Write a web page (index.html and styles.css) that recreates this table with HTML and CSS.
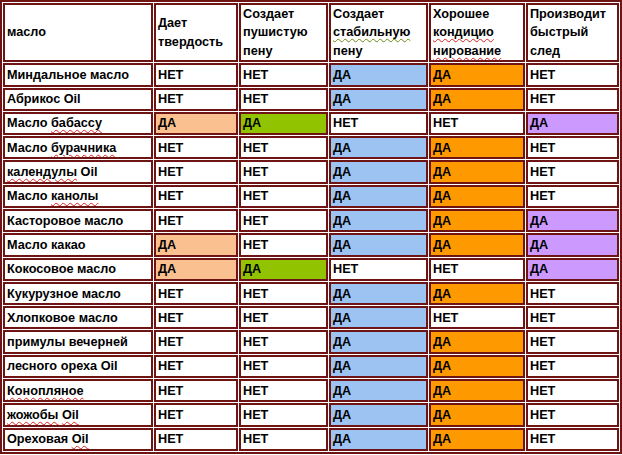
FILE: index.html
```html
<!DOCTYPE html>
<html lang="ru">
<head>
<meta charset="utf-8">
<link rel="stylesheet" href="styles.css">
</head>
<body>
<table class="grid">
  <colgroup>
    <col class="c1"><col class="c2"><col class="c3"><col class="c4"><col class="c5"><col class="c6">
  </colgroup>
  <thead>
    <tr class="head">
      <th>масло</th>
      <th>Дает твердость</th>
      <th>Создает пушистую пену</th>
      <th>Создает <span class="sp-g">стабильную</span> пену</th>
      <th>Хорошее <span class="sp">кондицио</span> <span class="sp">нирование</span></th>
      <th>Производит быстрый след</th>
    </tr>
  </thead>
  <tbody>
    <tr><td>Миндальное масло</td><td>НЕТ</td><td>НЕТ</td><td class="blue">ДА</td><td class="orange">ДА</td><td>НЕТ</td></tr>
    <tr><td>Абрикос Oil</td><td>НЕТ</td><td>НЕТ</td><td class="blue">ДА</td><td class="orange">ДА</td><td>НЕТ</td></tr>
    <tr><td>Масло <span class="sp">бабассу</span></td><td class="peach">ДА</td><td class="green">ДА</td><td>НЕТ</td><td>НЕТ</td><td class="purple">ДА</td></tr>
    <tr><td>Масло <span class="sp">бурачника</span></td><td>НЕТ</td><td>НЕТ</td><td class="blue">ДА</td><td class="orange">ДА</td><td>НЕТ</td></tr>
    <tr><td><span class="sp">календулы</span> Oil</td><td>НЕТ</td><td>НЕТ</td><td class="blue">ДА</td><td class="orange">ДА</td><td>НЕТ</td></tr>
    <tr><td>Масло <span class="sp">канолы</span></td><td>НЕТ</td><td>НЕТ</td><td class="blue">ДА</td><td class="orange">ДА</td><td>НЕТ</td></tr>
    <tr><td>Касторовое масло</td><td>НЕТ</td><td>НЕТ</td><td class="blue">ДА</td><td class="orange">ДА</td><td class="purple">ДА</td></tr>
    <tr><td>Масло какао</td><td class="peach">ДА</td><td>НЕТ</td><td class="blue">ДА</td><td class="orange">ДА</td><td class="purple">ДА</td></tr>
    <tr><td>Кокосовое масло</td><td class="peach">ДА</td><td class="green">ДА</td><td>НЕТ</td><td>НЕТ</td><td class="purple">ДА</td></tr>
    <tr><td>Кукурузное масло</td><td>НЕТ</td><td>НЕТ</td><td class="blue">ДА</td><td class="orange">ДА</td><td>НЕТ</td></tr>
    <tr><td>Хлопковое масло</td><td>НЕТ</td><td>НЕТ</td><td class="blue">ДА</td><td>НЕТ</td><td>НЕТ</td></tr>
    <tr><td>примулы вечерней</td><td>НЕТ</td><td>НЕТ</td><td class="blue">ДА</td><td class="orange">ДА</td><td>НЕТ</td></tr>
    <tr><td>лесного ореха Oil</td><td>НЕТ</td><td>НЕТ</td><td class="blue">ДА</td><td class="orange">ДА</td><td>НЕТ</td></tr>
    <tr><td><span class="sp">Конопляное</span></td><td>НЕТ</td><td>НЕТ</td><td class="blue">ДА</td><td class="orange">ДА</td><td>НЕТ</td></tr>
    <tr><td><span class="sp">жожобы</span> <span class="sp">Oil</span></td><td>НЕТ</td><td>НЕТ</td><td class="blue">ДА</td><td class="orange">ДА</td><td>НЕТ</td></tr>
    <tr><td>Ореховая <span class="sp">Oil</span></td><td>НЕТ</td><td>НЕТ</td><td class="blue">ДА</td><td class="orange">ДА</td><td>НЕТ</td></tr>
  </tbody>
</table>
</body>
</html>
```
FILE: styles.css
```css
html, body {
  margin: 0;
  padding: 0;
  background: #ffffff;
}

.grid {
  width: 622px;
  table-layout: fixed;
  border-collapse: separate;
  border-spacing: 1px;
  border: 2px solid #6e1414;
  font-family: "Liberation Sans", Arial, sans-serif;
  font-size: 12.7px;
  font-weight: bold;
  color: #000;
}

.c1 { width: 150px; }
.c2 { width: 84px; }
.c3 { width: 89px; }
.c4 { width: 99px; }
.c5 { width: 96px; }
.c6 { width: auto; }

.grid th,
.grid td {
  border: 2px solid #6e1414;
  padding: 0 2px;
  text-align: left;
  vertical-align: middle;
  white-space: nowrap;
  overflow: hidden;
}

.grid th {
  font-weight: bold;
  height: 55px;
  line-height: 18.4px;
  white-space: normal;
}

.grid td {
  height: 19.3px;
  line-height: 16px;
}

.peach { background: #fac08f; }
.green { background: #92c300; }
.blue { background: #9dc3f2; }
.orange { background: #ff9900; }
.purple { background: #cc99ff; }

.sp {
  text-decoration: underline wavy #e02020;
  text-decoration-thickness: 1px;
  text-underline-offset: 2px;
}

.sp-g {
  text-decoration: underline wavy #6a8a10;
  text-decoration-thickness: 1px;
  text-underline-offset: 2px;
}
```
